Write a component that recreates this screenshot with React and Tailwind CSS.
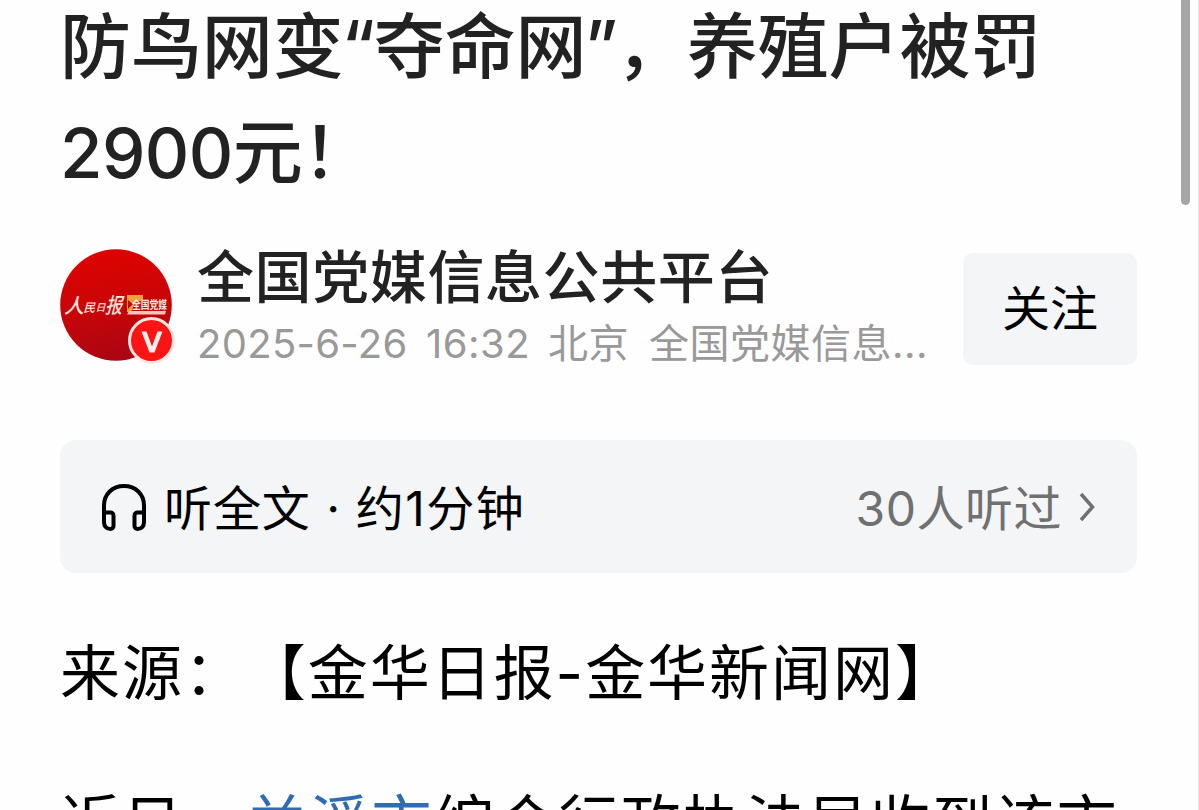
const article = {
  author: "全国党媒信息公共平台",
  date: "2025-6-26",
  time: "16:32",
  place: "北京",
  origin: "全国党媒信息...",
};

function Avatar() {
  return (
    <div className="relative h-28 w-28 shrink-0">
      <svg viewBox="0 0 112 112" className="h-28 w-28">
        <defs>
          <linearGradient id="red" x1="0.4" y1="0" x2="0.55" y2="1">
            <stop offset="0" stopColor="#de0300" />
            <stop offset="0.5" stopColor="#c90508" />
            <stop offset="1" stopColor="#a90613" />
          </linearGradient>
        </defs>
        <circle cx="56" cy="56" r="55.8" fill="url(#red)" />
        <g fill="#ffe3dc" fontWeight="500" fontFamily="Noto Sans CJK SC, sans-serif" transform="skewX(-14)">
          <text x="20" y="64" fontSize="20">人</text>
          <text x="39" y="63" fontSize="12">民</text>
          <text x="51" y="62" fontSize="10">日</text>
          <text x="61" y="64" fontSize="21" textLength="17" lengthAdjust="spacingAndGlyphs">报</text>
        </g>
        <path d="M67 46h16v5l-8 3-4 9h-4z" fill="#f0a03c" />
        <path d="M68 51l5 4-5 5z" fill="#b80c10" />
        <text x="72" y="60" fontSize="11" fontWeight="700" fill="#ffe9df" fontFamily="Noto Sans CJK SC, sans-serif" textLength="35" lengthAdjust="spacingAndGlyphs">全国党媒</text>
        <path d="M69 62h37l-1 3.500H67z" fill="#f6c6b8" />
      </svg>
      {/* Verified badge */}
      <div className="absolute -right-[3px] -bottom-[3px] flex h-[47px] w-[47px] items-center justify-center rounded-full border-[3px] border-[#ffe6df] bg-[#fa1414]">
        <svg viewBox="0 0 22 22" className="mt-0.5 h-[22px] w-[22px]" fill="#ffeeea">
          <path d="M0.500 0.500h5L11 15.500 16.500 0.500h5L13.500 21.500H8.500z" />
        </svg>
      </div>
    </div>
  );
}

function AuthorRow() {
  return (
    <div className="mt-[42px] flex h-[120px] items-start">
      <Avatar />
      <div className="ml-[25px] w-[766px] whitespace-nowrap">
        <p className="h-[68px] text-[57px] leading-[58px] font-medium tracking-[0.6px] text-[#222]">
          {article.author}
        </p>
        <p className="flex text-[40px] leading-[54px] tracking-[0.5px] text-[#999]">
          <span className="w-[229px] tracking-[0.3px]">{article.date}</span>
          <span className="w-[122px]">{article.time}</span>
          <span className="w-[101px]">{article.place}</span>
          <span>{article.origin}</span>
        </p>
      </div>
      <button className="mt-1 h-28 w-[174px] rounded-[10px] bg-[#f3f5f7] text-[48px] text-black">
        关注
      </button>
    </div>
  );
}

function ListenBar() {
  return (
    <div className="mt-[71px] flex h-[133px] items-center rounded-2xl bg-[#f3f5f7] pr-[42px] pl-[41px] text-[48px] whitespace-nowrap text-black">
      <svg viewBox="0 0 46 48" className="h-12 w-[46px]" fill="none" stroke="currentColor" strokeWidth="4">
        <path d="M3 30V22.500C3 11 11.500 3 23 3s20 8 20 19.500V30" />
        <path d="M3 29.500h6.500a3 3 0 0 1 3 3V43a3 3 0 0 1-3 3C5 46 3 43 3 39zM43 29.500h-6.500a3 3 0 0 0-3 3V43a3 3 0 0 0 3 3C41 46 43 43 43 39z" />
      </svg>
      <span className="ml-[17px] pt-1 tracking-[0.9px]">听全文</span>
      <span className="w-[45px] pt-1 text-center">·</span>
      <span className="pt-1 tracking-[1.5px]">约1分钟</span>
      <span className="ml-auto pt-1 tracking-[0.5px] text-[#707070]">30人听过</span>
      <svg viewBox="0 0 16 30" className="ml-[17px] h-[30px] w-4" fill="none" stroke="#707070" strokeWidth="3.500">
        <path d="M2 2l11.500 13L2 28" />
      </svg>
    </div>
  );
}

export default function App() {
  return (
    <div className="flex h-[810px] w-[1199px] overflow-hidden border-r border-[#e8e8e8] bg-[#fefefe] font-[Inter,'Noto_Sans_CJK_SC',sans-serif]">
      <main className="ml-[60px] w-[1077px] shrink-0">
        <h1 className="-mt-[7px] text-[71px] leading-[107px] font-medium tracking-[-0.1px] whitespace-nowrap text-[#222]">
          <span className="block">
            防鸟网变<span className="-ml-0.5 tracking-[-1.500px]">“</span>夺命网
            <span className="-ml-0.5 tracking-[-2px]">”</span>，养殖户被罚
          </span>
          <span className="block h-[107px] text-[70px] leading-[106px]">
            <span className="text-[69px] leading-none tracking-[-0.6px]">2900</span>元！
          </span>
        </h1>
        <AuthorRow />
        <ListenBar />
        <div className="mt-[55px] text-[60px] leading-[90px] tracking-[1.95px] whitespace-nowrap text-black [text-spacing-trim:space-all]">
          <p>来源：【金华日报-金华新闻网】</p>
          <p className="mt-[60px] tracking-[2.3px]">
            近日，<a className="text-[#2f6cb3]">兰溪市</a>综合行政执法局收到该市
          </p>
        </div>
      </main>
      {/* Scrollbar */}
      <div className="ml-[44px] h-[205px] w-[9px] shrink-0 rounded-b-full bg-[#a6a6a6]" />
    </div>
  );
}
